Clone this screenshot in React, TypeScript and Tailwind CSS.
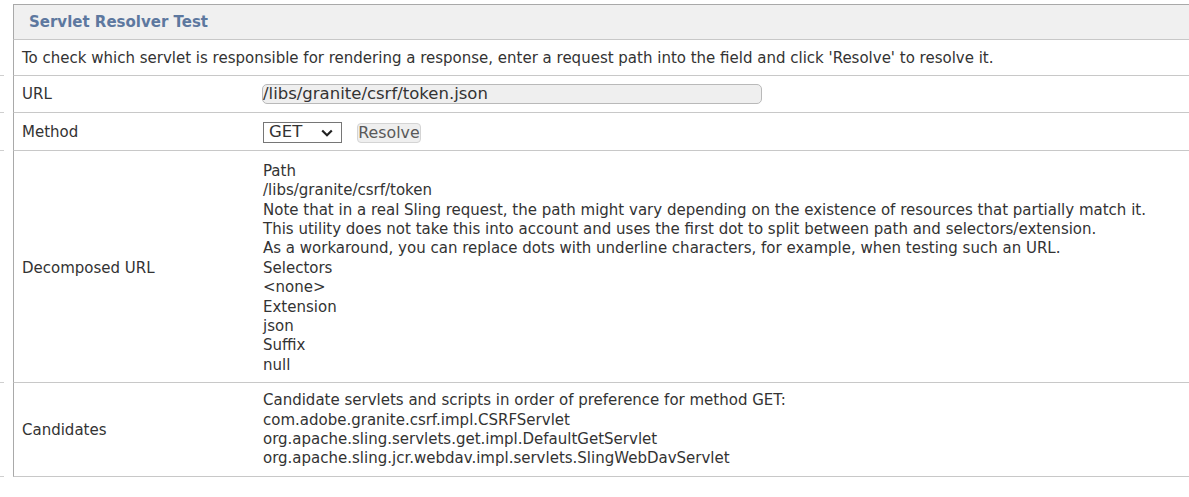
import React from 'react';

const FONT = { fontFamily: '"DejaVu Sans", Verdana, sans-serif' };

const DECOMPOSED = [
  'Path',
  '/libs/granite/csrf/token',
  'Note that in a real Sling request, the path might vary depending on the existence of resources that partially match it.',
  'This utility does not take this into account and uses the first dot to split between path and selectors/extension.',
  'As a workaround, you can replace dots with underline characters, for example, when testing such an URL.',
  'Selectors',
  '<none>',
  'Extension',
  'json',
  'Suffix',
  'null',
];

const CANDIDATES = [
  'Candidate servlets and scripts in order of preference for method GET:',
  'com.adobe.granite.csrf.impl.CSRFServlet',
  'org.apache.sling.servlets.get.impl.DefaultGetServlet',
  'org.apache.sling.jcr.webdav.impl.servlets.SlingWebDavServlet',
];

function Row({
  stub = true,
  children,
  className = '',
}: {
  stub?: boolean;
  children: React.ReactNode;
  className?: string;
}) {
  return (
    <div className="flex">
      <div className={`w-[4px] shrink-0 ${stub ? 'border-b border-[#cfcfcf]' : ''}`} />
      <div className="w-[9px] shrink-0" />
      <div className={`flex flex-1 border-l border-b border-[#c8c8c8] border-l-[#a9a9a9] ${className}`}>
        {children}
      </div>
    </div>
  );
}

function Label({ children }: { children: React.ReactNode }) {
  return <div className="w-[241px] shrink-0 flex items-center pl-[8px]">{children}</div>;
}

export default function App() {
  return (
    <div className="w-[1189px] h-[497px] bg-white overflow-hidden pt-[4px] text-[15px] text-[#333]" style={FONT}>
      <div className="flex">
        <div className="w-[4px] shrink-0" />
        <div className="w-[9px] shrink-0" />
        <div className="flex-1 border-t border-[#a9a9a9] border-l border-l-[#a9a9a9] border-b border-b-[#c8c8c8] bg-[#f0f0f0] h-[36px] flex items-center pl-[15px]">
          <span className="font-bold text-[15px] text-[#5d789f]">Servlet Resolver Test</span>
        </div>
      </div>

      <Row className="h-[36px] items-center pl-[8px] pt-[2px]">
        To check which servlet is responsible for rendering a response, enter a request path into the field and click 'Resolve' to resolve it.
      </Row>

      <Row className="h-[37px]">
        <Label>URL</Label>
        <div className="flex items-center pl-[7px]">
          <div className="w-[500px] h-[20px] rounded-[5px] border border-[#b9b9b9] bg-[#efefef] flex items-center text-[16.5px] text-[#333] leading-none">
            /libs/granite/csrf/token.json
          </div>
        </div>
      </Row>

      <Row className="h-[38px] pt-[2px]">
        <Label>Method</Label>
        <div className="flex items-center pl-[8px] gap-[15px]">
          <div className="w-[79px] h-[21px] border border-[#767676] bg-white flex items-center justify-between pl-[5px] pr-[8px] text-[16.5px] text-[#333]">
            <span>GET</span>
            <svg width="12" height="8" viewBox="0 0 12 8" fill="none">
              <path d="M1.2 1.5 L6 6.3 L10.8 1.5" stroke="#222" strokeWidth="2.2" />
            </svg>
          </div>
          <div className="w-[64px] h-[20px] rounded-[4px] border border-[#d4d4d4] bg-[#efefef] flex items-center justify-center text-[15.8px] text-[#595959]">
            Resolve
          </div>
        </div>
      </Row>

      <Row className="h-[232px] pt-[4px]">
        <Label>Decomposed URL</Label>
        <div className="flex flex-col justify-center pl-[8px] leading-[19.4px]">
          {DECOMPOSED.map((line, i) => (
            <div key={i}>{line}</div>
          ))}
        </div>
      </Row>

      <Row className="h-[94px] pt-[1px]">
        <Label>Candidates</Label>
        <div className="flex flex-col justify-center pl-[8px] leading-[19.4px]">
          {CANDIDATES.map((line, i) => (
            <div key={i}>{line}</div>
          ))}
        </div>
      </Row>
    </div>
  );
}
